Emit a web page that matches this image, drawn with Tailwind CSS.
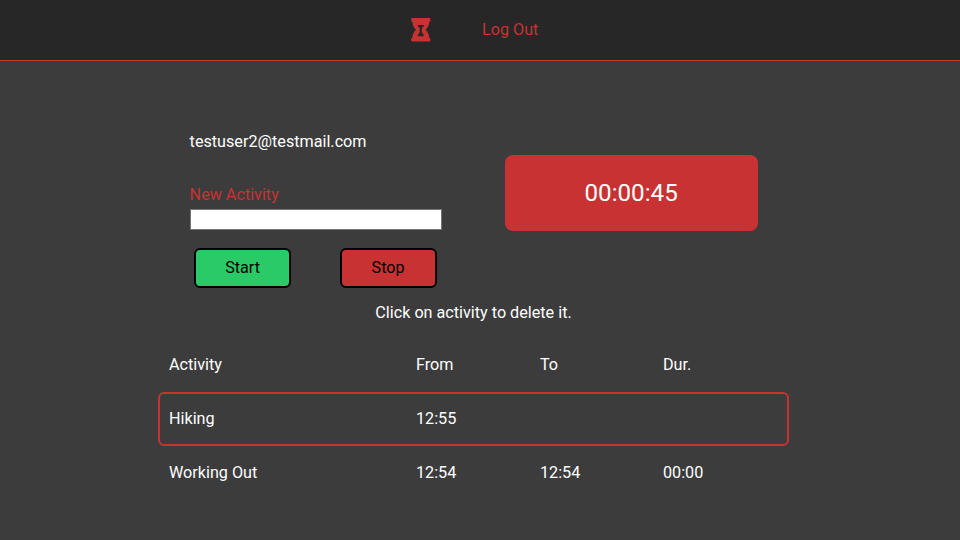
<!DOCTYPE html>
<html lang="en">
<head>
<meta charset="utf-8">
<title>Activity Tracker</title>
<script src="https://cdn.jsdelivr.net/npm/@tailwindcss/browser@4"></script>
</head>
<body class="h-screen overflow-hidden bg-[#3c3c3c] font-[Roboto,sans-serif] text-[16.18px] text-white">
<header class="flex h-[61px] items-center border-b border-[#c83232] bg-[#272727] pl-[411px] text-[#c83232]">
  <svg class="mb-px h-6 w-5 shrink-0" viewBox="0 0 20 24" fill="currentColor" fill-rule="evenodd" aria-label="Home"><path d="M1.700 .1h16.200c1 0 1.500.6 1.500 1.400v1c0 .8-.4 1.300-1.100 1.400-.3 3.300-1.500 5.900-3.800 7.900 2.300 2 3.500 4.600 3.800 7.900.7.1 1.100.6 1.100 1.400v.9c0 .9-.5 1.500-1.500 1.500H1.700c-1 0-1.500-.6-1.500-1.500v-.9c0-.8.4-1.300 1.100-1.400.3-3.300 1.500-5.900 3.800-7.900-2.300-2-3.500-4.600-3.800-7.900-.7-.1-1.100-.6-1.100-1.400v-1C.2.700.7.100 1.700.1zM6.600 7.100c.3 1.300 1 2.200 2.100 3v4.400c-1.100.8-1.800 1.900-2 3.700h6.200c-.2-1.800-.9-2.900-2-3.700v-4.400c1.100-.8 1.800-1.700 2.100-3z"/></svg>
  <a class="ml-[51px]">Log Out</a>
</header>
<main class="ml-[158px] w-[631px] pt-[68px]">
  <section class="flex h-[159px]">
    <form class="ml-[31.600px] w-[252px]">
      <p class="pt-px leading-6">testuser2@testmail.com</p>
      <label class="mt-[29px] block leading-6 text-[#c83232]" for="activity">New Activity</label>
      <input id="activity" class="mt-[2px] block h-[21px] w-full border border-[#767676] bg-white text-black">
      <div class="mt-[18px] flex justify-between pr-[5px] pl-[4.500px] text-black">
        <button type="button" class="h-10 w-[97px] rounded-md border-2 border-black bg-[#2acb66]">Start</button>
        <button type="button" class="h-10 w-[97px] rounded-md border-2 border-black bg-[#c83232]">Stop</button>
      </div>
    </form>
    <div class="mt-[26px] ml-[63px] flex h-[76px] w-[253px] items-center justify-center rounded-lg bg-[#c83232] text-[24.2px]">00:00:45</div>
  </section>
  <p class="mt-[13px] text-center leading-6">Click on activity to delete it.</p>
  <section class="mt-[13px]">
    <div class="grid h-[54px] grid-cols-[247px_124px_123px_1fr] items-center border-2 border-transparent pl-[9px]"><span>Activity</span><span>From</span><span>To</span><span>Dur.</span></div>
    <div class="grid h-[54px] grid-cols-[247px_124px_123px_1fr] items-center rounded-md border-2 border-[#c83232] pl-[9px]"><span>Hiking</span><span>12:55</span></div>
    <div class="grid h-[54px] grid-cols-[247px_124px_123px_1fr] items-center border-2 border-transparent pl-[9px]"><span>Working Out</span><span>12:54</span><span>12:54</span><span>00:00</span></div>
  </section>
</main>
</body>
</html>
